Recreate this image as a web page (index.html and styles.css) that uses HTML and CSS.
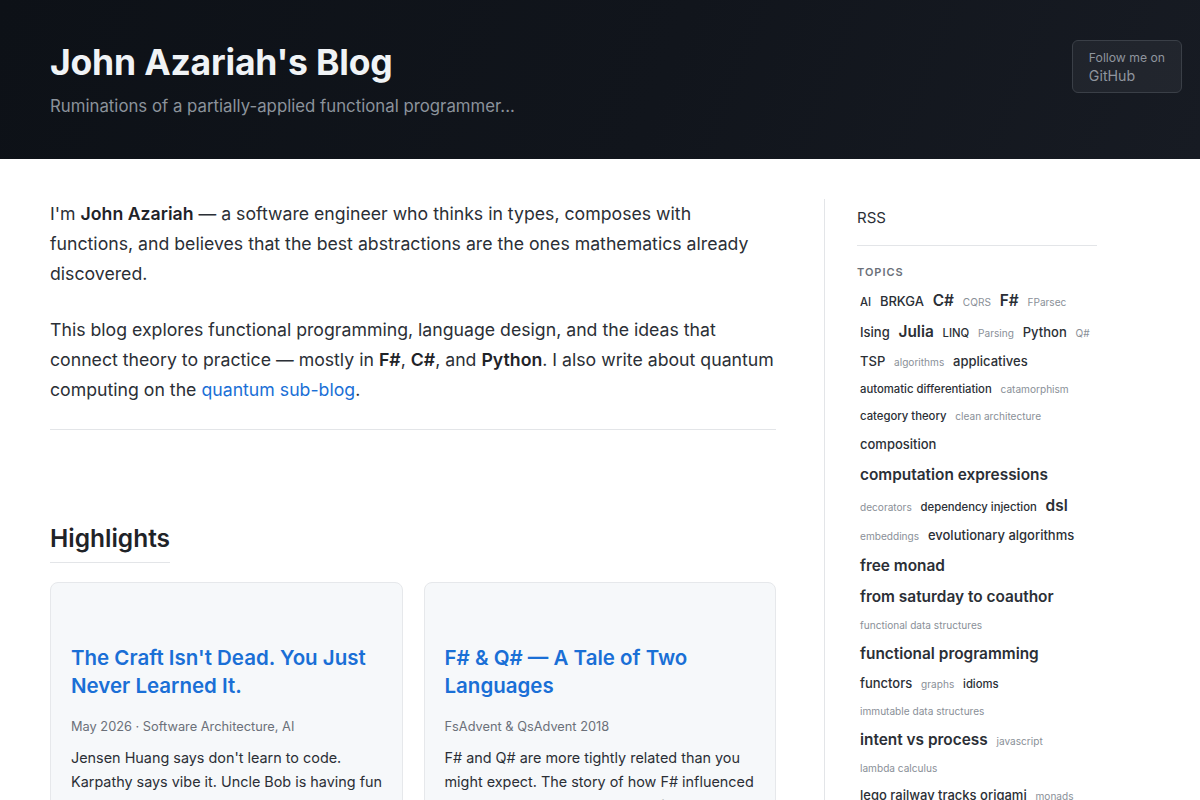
FILE: index.html
```html
<!DOCTYPE html>
<html lang="en">
  <head>
    <meta charset="UTF-8" />
    <meta name="viewport" content="width=device-width, initial-scale=1.0" />
    <link rel="stylesheet" href="styles.css">
    <title>John Azariah's Blog</title>
  </head>
  <body>
    <header class="site-header">
      <div class="brand">
        <h1>John Azariah's Blog</h1>
        <p>Ruminations of a partially-applied functional programmer...</p>
      </div>
      <a class="gh-follow" href="#">
        <span class="gh-small">Follow me on</span>
        <span class="gh-big">GitHub</span>
      </a>
    </header>

    <div class="layout">
      <main class="content">
        <p class="intro">I'm <strong>John Azariah</strong> — a software engineer who thinks in types, composes with functions, and believes that the best abstractions are the ones mathematics already discovered.</p>
        <p class="intro">This blog explores functional programming, language design, and the ideas that connect theory to practice — mostly in <strong>F#</strong>, <strong>C#</strong>, and <strong>Python</strong>. I also write about quantum computing on the <a href="#">quantum sub-blog</a>.</p>
        <hr class="rule" />

        <h2 class="section-title">Highlights</h2>
        <div class="cards">
          <article class="card">
            <h3><a href="#">The Craft Isn't Dead. You Just Never Learned It.</a></h3>
            <div class="meta">May 2026 · Software Architecture, AI</div>
            <p>Jensen Huang says don't learn to code. Karpathy says vibe it. Uncle Bob is having fun with Claude. They're all wrong — and right.</p>
          </article>
          <article class="card">
            <h3><a href="#">F# &amp; Q# — A Tale of Two Languages</a></h3>
            <div class="meta">FsAdvent &amp; QsAdvent 2018</div>
            <p>F# and Q# are more tightly related than you might expect. The story of how F# influenced and enabled the development of Q#.</p>
          </article>
        </div>
      </main>

      <aside class="sidebar">
        <a class="rss" href="#">RSS</a>
        <div class="topics-label">TOPICS</div>
        <div class="tags">
          <a class="t2" href="#">AI</a>
          <a class="t3" href="#">BRKGA</a>
          <a class="t4" href="#">C#</a>
          <a class="t1" href="#">CQRS</a>
          <a class="t4" href="#">F#</a>
          <a class="t1" href="#">FParsec</a>
          <a class="t3" href="#">Ising</a>
          <a class="t4" href="#">Julia</a>
          <a class="t2" href="#">LINQ</a>
          <a class="t1" href="#">Parsing</a>
          <a class="t3" href="#">Python</a>
          <a class="t1" href="#">Q#</a>
          <a class="t3" href="#">TSP</a>
          <a class="t1" href="#">algorithms</a>
          <a class="t3" href="#">applicatives</a>
          <a class="t2" href="#">automatic differentiation</a>
          <a class="t1" href="#">catamorphism</a>
          <a class="t2" href="#">category theory</a>
          <a class="t1" href="#">clean architecture</a>
          <a class="t3" href="#">composition</a>
          <a class="t4" href="#">computation expressions</a>
          <a class="t1" href="#">decorators</a>
          <a class="t2" href="#">dependency injection</a>
          <a class="t4" href="#">dsl</a>
          <a class="t1" href="#">embeddings</a>
          <a class="t3" href="#">evolutionary algorithms</a>
          <a class="t4" href="#">free monad</a>
          <a class="t4" href="#">from saturday to coauthor</a>
          <a class="t1" href="#">functional data structures</a>
          <a class="t4" href="#">functional programming</a>
          <a class="t3" href="#">functors</a>
          <a class="t1" href="#">graphs</a>
          <a class="t2" href="#">idioms</a>
          <a class="t1" href="#">immutable data structures</a>
          <a class="t4" href="#">intent vs process</a>
          <a class="t1" href="#">javascript</a>
          <a class="t1" href="#">lambda calculus</a>
          <a class="t3" href="#">lego railway tracks origami</a>
          <a class="t1" href="#">monads</a>
          <a class="t3" href="#">parser combinators</a>
        </div>
      </aside>
    </div>
  </body>
</html>
```

FILE: styles.css
```css
body {
  font-family: "Inter", "Liberation Sans", sans-serif;
  margin: 0;
  background-color: #fff;
  color: #2b2f36;
}

a {
  text-decoration: none;
}

/* header band */
.site-header {
  display: flex;
  justify-content: space-between;
  align-items: flex-start;
  height: 159px;
  box-sizing: border-box;
  padding: 40px 18px 0 50px;
  background: linear-gradient(110deg, #0d1117 0%, #11151c 55%, #171b23 100%);
}

.brand h1 {
  margin: 2px 0 0;
  font-size: 35.5px;
  line-height: 1.2;
  font-weight: 700;
  color: #f0f3f6;
  letter-spacing: -0.2px;
}

.brand p {
  margin: 9px 0 0;
  font-size: 16.8px;
  line-height: 25px;
  color: #8b929b;
}

.gh-follow {
  display: flex;
  flex-direction: column;
  padding: 8px 16px 7px;
  border: 1px solid #3a3f47;
  border-radius: 6px;
  background-color: rgba(255, 255, 255, 0.05);
  color: #8f959e;
}

.gh-small {
  font-size: 12.2px;
  line-height: 17px;
}

.gh-big {
  font-size: 14.2px;
  line-height: 19px;
}

/* two column body */
.layout {
  display: grid;
  grid-template-columns: 726px 273px;
  gap: 48px;
  padding: 40px 0 0 50px;
}

.intro {
  margin: 0 0 26px;
  font-size: 17.7px;
  line-height: 30px;
  color: #2b2f36;
}

.intro strong {
  font-weight: 600;
  color: #1f2328;
}

.intro a {
  color: #1a6fd6;
}

.rule {
  margin: -2px 0 0;
  border: none;
  border-top: 1px solid #e3e5e8;
}

.section-title {
  display: inline-block;
  margin: 91px 0 19px;
  padding-bottom: 7px;
  border-bottom: 1px solid #e3e5e8;
  font-size: 24.5px;
  line-height: 34px;
  font-weight: 600;
  color: #1f2328;
}

.cards {
  display: grid;
  grid-template-columns: 1fr 1fr;
  gap: 21px;
}

.card {
  background-color: #f6f8fa;
  border: 1px solid #e6e8eb;
  border-radius: 8px;
  padding: 61px 17px 20px 20px;
}

.card h3 {
  margin: 0;
  font-size: 20.5px;
  line-height: 28px;
  font-weight: 600;
}

.card h3 a {
  color: #1a6fd6;
}

.card .meta {
  margin-top: 17px;
  font-size: 12.8px;
  line-height: 20px;
  color: #6b7079;
}

.card p {
  margin: 9px 0 0;
  font-size: 14.4px;
  line-height: 24px;
  color: #2b2f36;
}

/* sidebar */
.sidebar {
  border-left: 1px solid #e3e5e8;
  padding: 8px 0 0 32px;
  height: 700px;
}

.rss {
  display: block;
  padding-bottom: 16px;
  border-bottom: 1px solid #e3e5e8;
  font-size: 15px;
  line-height: 22px;
  color: #2b2f36;
}

.topics-label {
  margin-top: 18px;
  font-size: 11px;
  line-height: 16px;
  font-weight: 600;
  letter-spacing: 1px;
  color: #6b7079;
}

.tags {
  margin-top: 5px;
  font-size: 10px;
  line-height: 26px;
}

.tags a {
  display: inline-block;
  padding: 0 3px;
  color: #2b2f36;
}

.tags .t1 {
  font-size: 10.1px;
  line-height: 26px;
  color: #8a9098;
}

.tags .t2 {
  font-size: 11.3px;
  line-height: 27px;
  font-weight: 500;
}

.tags .t3 {
  font-size: 13px;
  line-height: 29px;
  font-weight: 500;
}

.tags .t4 {
  font-size: 15.4px;
  line-height: 31px;
  font-weight: 600;
}
```
